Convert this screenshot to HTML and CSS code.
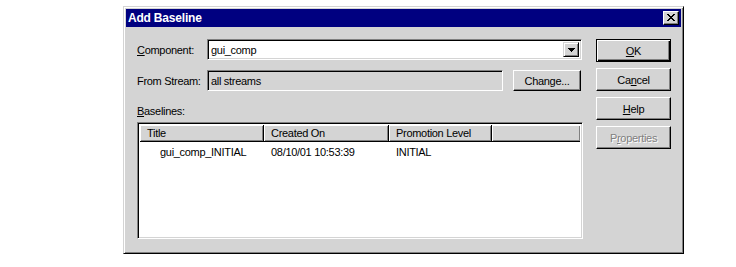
FILE: index.html
```html
<!DOCTYPE html>
<html>
<head>
<meta charset="utf-8">
<link rel="stylesheet" href="styles.css">
</head>
<body>
<div class="page">
  <div class="dialog">
    <div class="titlebar">
      <span class="title">Add Baseline</span>
      <div class="close">
        <svg width="8" height="7" viewBox="0 0 8 7" shape-rendering="crispEdges">
          <path fill="#000" d="M0 0h2v1h-2zM6 0h2v1h-2zM1 1h2v1h-2zM5 1h2v1h-2zM2 2h4v1h-4zM3 3h2v1h-2zM2 4h4v1h-4zM1 5h2v1h-2zM5 5h2v1h-2zM0 6h2v1h-2zM6 6h2v1h-2z"/>
        </svg>
      </div>
    </div>
    <div class="content">
      <div class="main">
        <div class="row">
          <span class="lbl"><u>C</u>omponent:</span>
          <div class="combo">
            <span class="combo-text">gui_comp</span>
            <div class="drop">
              <svg width="7" height="4" viewBox="0 0 7 4" shape-rendering="crispEdges">
                <path fill="#000" d="M0 0h7v1h-7zM1 1h5v1h-5zM2 2h3v1h-3zM3 3h1v1h-1z"/>
              </svg>
            </div>
          </div>
        </div>
        <div class="row row-stream">
          <span class="lbl">From Stream:</span>
          <div class="field">all streams</div>
          <div class="btn btn-change">Change...</div>
        </div>
        <div class="lbl baselines-lbl"><u>B</u>aselines:</div>
        <div class="list">
          <div class="list-header">
            <div class="hcol c1">Title</div>
            <div class="hcol c2">Created On</div>
            <div class="hcol c3">Promotion Level</div>
            <div class="hcol c4"></div>
          </div>
          <div class="list-row">
            <div class="cell c1 first">gui_comp_INITIAL</div>
            <div class="cell c2">08/10/01 10:53:39</div>
            <div class="cell c3">INITIAL</div>
          </div>
        </div>
      </div>
      <div class="buttons">
        <div class="btn btn-default"><u>O</u>K</div>
        <div class="btn">Ca<u>n</u>cel</div>
        <div class="btn"><u>H</u>elp</div>
        <div class="btn btn-disabled">P<u>r</u>operties</div>
      </div>
    </div>
  </div>
</div>
</body>
</html>
```

FILE: styles.css
```css
html, body {
  margin: 0;
  padding: 0;
  background: #ffffff;
}

body {
  font-family: "Liberation Sans", Arial, sans-serif;
  font-size: 11px;
  letter-spacing: -0.3px;
  color: #000;
}

.page {
  padding: 6px 0 0 123px;
}

.dialog {
  width: 561px;
  height: 248px;
  box-sizing: border-box;
  background: #d4d4d4;
  border: 1px solid;
  border-color: #d4d4d4 #000 #000 #d4d4d4;
  box-shadow: inset 1px 1px #fff, inset -1px -1px #808080;
  padding: 2px;
  display: flex;
  flex-direction: column;
}

.titlebar {
  height: 18px;
  background: #000080;
  display: flex;
  align-items: center;
  justify-content: space-between;
  padding: 0 2px 0 2px;
}

.title {
  color: #fff;
  font-weight: bold;
  font-size: 12px;
  letter-spacing: -0.2px;
}

.close {
  width: 16px;
  height: 14px;
  box-sizing: border-box;
  background: #d4d4d4;
  border: 1px solid;
  border-color: #fff #000 #000 #fff;
  box-shadow: inset -1px -1px #808080;
  display: flex;
  align-items: center;
  justify-content: center;
  padding: 0 1px 1px 0;
}

.close svg, .drop svg {
  display: block;
}

.content {
  display: flex;
  gap: 13px;
  padding: 12px 0 0 11px;
}

.main {
  width: 446px;
  display: flex;
  flex-direction: column;
}

.row {
  display: flex;
  align-items: center;
  height: 21px;
}

.row-stream {
  margin-top: 10px;
}

.lbl {
  width: 70px;
  flex: none;
}

.combo {
  width: 375px;
  height: 21px;
  box-sizing: border-box;
  background: #fff;
  border: 1px solid;
  border-color: #808080 #fff #fff #808080;
  box-shadow: inset 1px 1px #000, inset -1px -1px #d4d4d4;
  padding: 2px;
  display: flex;
  align-items: center;
  justify-content: space-between;
}

.combo-text {
  padding-left: 1px;
}

.drop {
  width: 16px;
  height: 15px;
  box-sizing: border-box;
  background: #d4d4d4;
  border: 1px solid;
  border-color: #d4d4d4 #000 #000 #d4d4d4;
  box-shadow: inset 1px 1px #fff, inset -1px -1px #808080;
  display: flex;
  align-items: center;
  justify-content: center;
}

.field {
  width: 296px;
  height: 21px;
  box-sizing: border-box;
  border: 1px solid;
  border-color: #808080 #fff #fff #808080;
  box-shadow: inset 1px 1px #000, inset -1px -1px #d4d4d4;
  padding: 0 3px;
  display: flex;
  align-items: center;
}

.btn {
  width: 75px;
  height: 23px;
  box-sizing: border-box;
  background: #d4d4d4;
  border: 1px solid;
  border-color: #fff #000 #000 #fff;
  box-shadow: inset -1px -1px #808080;
  display: flex;
  align-items: center;
  justify-content: center;
}

.btn-change {
  width: 68px;
  height: 21px;
  margin-left: 10px;
}

.btn-default {
  border-color: #000;
  box-shadow: inset 1px 1px #fff, inset -1px -1px #000, inset -2px -2px #808080;
}

.btn-disabled {
  color: #808080;
  text-shadow: 1px 1px #fff;
}

.baselines-lbl {
  width: auto;
  margin-top: 14px;
  line-height: 13px;
}

.list {
  margin-top: 4px;
  height: 117px;
  box-sizing: border-box;
  background: #fff;
  border: 1px solid;
  border-color: #808080 #fff #fff #808080;
  box-shadow: inset 1px 1px #000, inset -1px -1px #d4d4d4;
  padding: 2px;
}

.list-header {
  display: flex;
  height: 17px;
}

.hcol {
  box-sizing: border-box;
  height: 17px;
  background: #d4d4d4;
  border-right: 1px solid #000;
  border-bottom: 1px solid #000;
  box-shadow: inset 1px 1px #fff, inset -1px -1px #808080;
  padding-left: 7px;
  display: flex;
  align-items: center;
}

.c1 { width: 124px; }
.c2 { width: 125px; }
.c3 { width: 103px; }
.c4 { flex: 1; border-right: none; }

.list-row {
  display: flex;
  height: 16px;
  margin-top: 2px;
  align-items: center;
}

.cell {
  padding-left: 7px;
  box-sizing: border-box;
}

.cell.first {
  padding-left: 20px;
}

.buttons {
  display: flex;
  flex-direction: column;
  gap: 6px;
  width: 75px;
}
```
